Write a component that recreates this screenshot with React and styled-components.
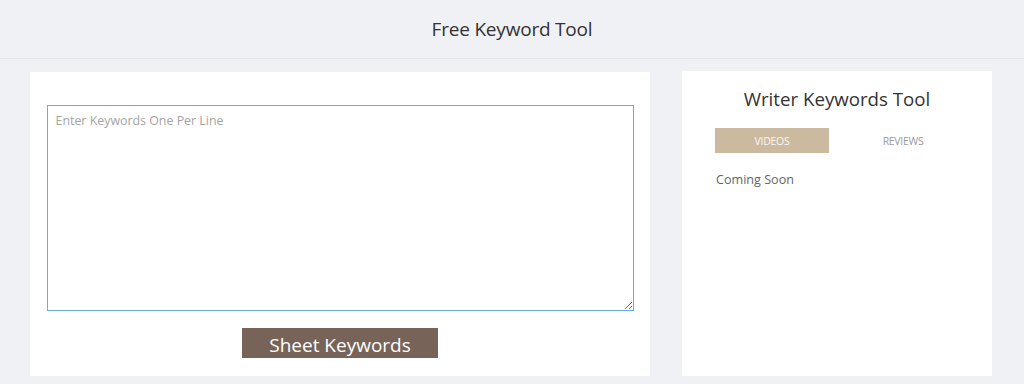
import React from "react";
import styled, { createGlobalStyle } from "styled-components";

const Global = createGlobalStyle`
  html, body { margin: 0; padding: 0; background: #f0f1f5; }
  body { font-family: "Open Sans", "Noto Sans", sans-serif; color: #333; }
  * { box-sizing: border-box; }
`;

const Header = styled.header`
  height: 59px;
  border-bottom: 1px solid #e4e5ea;
  display: flex;
  align-items: center;
  justify-content: center;
`;

const Title = styled.h1`
  margin: 0;
  font-size: 19px;
  font-weight: 400;
  color: #333;
  letter-spacing: -0.2px;
`;

const Main = styled.main`
  display: flex;
  align-items: flex-start;
  gap: 32px;
  padding: 12px 0 0 30px;
`;

const Panel = styled.section`
  background: #fff;
  width: ${(p) => p.$w}px;
  height: ${(p) => p.$h}px;
  margin-top: ${(p) => p.$top || 0}px;
  display: flex;
  flex-direction: column;
  flex-shrink: 0;
`;

const LeftPanel = styled(Panel)`
  padding: 33px 16px 0 16px;
  align-items: center;
`;

const TextArea = styled.textarea`
  width: 587px;
  height: 206px;
  border: 1px solid #66aee0;
  border-radius: 0;
  padding: 6px 8px;
  font-family: "Open Sans", "Noto Sans", sans-serif;
  font-size: 12.4px;
  color: #333;
  resize: both;
  outline: none;
  &::placeholder { color: #a4a4a4; }
`;

const SheetButton = styled.button`
  margin-top: 17px;
  width: 196px;
  height: 30px;
  border: none;
  background: #776358;
  color: #fff;
  font-family: "Open Sans", "Noto Sans", sans-serif;
  font-size: 19px;
  line-height: 30px;
  padding: 2px 0 0;
  cursor: pointer;
`;

const RightPanel = styled(Panel)`
  padding: 15px 33px 0 33px;
`;

const SideTitle = styled.h2`
  margin: 0;
  text-align: center;
  font-size: 18.7px;
  font-weight: 400;
  color: #333;
  line-height: 26px;
`;

const Tabs = styled.div`
  display: flex;
  margin-top: 16px;
`;

const Tab = styled.div`
  width: ${(p) => p.$w}px;
  flex-shrink: 0;
  height: 25px;
  display: flex;
  align-items: center;
  justify-content: center;
  font-size: 10.5px;
  text-transform: uppercase;
  letter-spacing: -0.3px;
  background: ${(p) => (p.$active ? "#cbb9a0" : "transparent")};
  color: ${(p) => (p.$active ? "#fbf7ef" : "#9a9a9a")};
`;

const Coming = styled.p`
  margin: 18px 0 0 1px;
  font-size: 12.6px;
  color: #666;
`;

export default function App() {
  return (
    <>
      <Global />
      <Header>
        <Title>Free Keyword Tool</Title>
      </Header>
      <Main>
        <LeftPanel $w={620} $h={304} $top={1}>
          <TextArea placeholder="Enter Keywords One Per Line" />
          <SheetButton>Sheet Keywords</SheetButton>
        </LeftPanel>
        <RightPanel $w={310} $h={305}>
          <SideTitle>Writer Keywords Tool</SideTitle>
          <Tabs>
            <Tab $active $w={114}>Videos</Tab>
            <Tab $w={148}>Reviews</Tab>
          </Tabs>
          <Coming>Coming Soon</Coming>
        </RightPanel>
      </Main>
    </>
  );
}
